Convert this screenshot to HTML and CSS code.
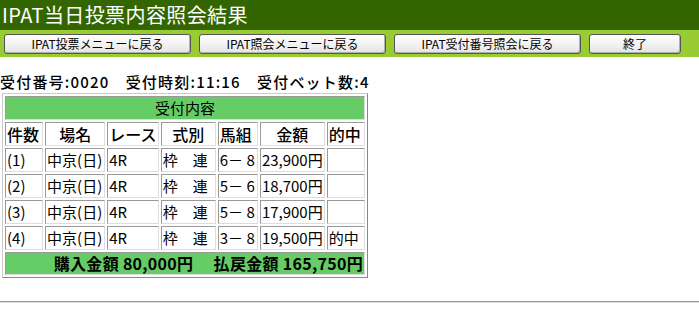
FILE: index.html
```html
<!DOCTYPE html>
<html lang="ja">
<head>
<meta charset="utf-8">
<link rel="stylesheet" href="styles.css">
</head>
<body>
<div class="title">IPAT当日投票内容照会結果</div>
<div class="nav">
  <button class="btn btn-wide">IPAT投票メニューに戻る</button>
  <button class="btn btn-wide">IPAT照会メニューに戻る</button>
  <button class="btn btn-wide">IPAT受付番号照会に戻る</button>
  <button class="btn btn-end">終了</button>
</div>
<div class="info">受付番号:0020　受付時刻:11:16　受付ベット数:4</div>
<table class="bets">
  <tr><th colspan="7" class="head">受付内容</th></tr>
  <tr class="cols">
    <td class="c1">件数</td><td class="c2 center">場名</td><td class="c3">レース</td><td class="c4 center">式別</td><td class="c5">馬組</td><td class="c6 center">金額</td><td class="c7">的中</td>
  </tr>
  <tr><td>(1)</td><td>中京(日)</td><td>4R</td><td>枠　連</td><td>6－ 8</td><td>23,900円</td><td></td></tr>
  <tr><td>(2)</td><td>中京(日)</td><td>4R</td><td>枠　連</td><td>5－ 6</td><td>18,700円</td><td></td></tr>
  <tr><td>(3)</td><td>中京(日)</td><td>4R</td><td>枠　連</td><td>5－ 8</td><td>17,900円</td><td></td></tr>
  <tr><td>(4)</td><td>中京(日)</td><td>4R</td><td>枠　連</td><td>3－ 8</td><td>19,500円</td><td>的中</td></tr>
  <tr><td colspan="7" class="foot">購入金額 80,000円　 払戻金額 165,750円</td></tr>
</table>
<hr class="rule">
</body>
</html>
```
FILE: styles.css
```css
html, body {
  margin: 0;
  padding: 0;
  background: #fff;
  font-family: "Noto Sans CJK JP", "Noto Sans", sans-serif;
  color: #000;
}
.title {
  background: #336600;
  color: #fff;
  font-size: 20px;
  line-height: 30px;
  height: 30px;
  padding-left: 2px;
  letter-spacing: 0.4px;
}
.nav {
  background: #99cc33;
  height: 27px;
  display: flex;
  align-items: center;
  gap: 8px;
  padding-left: 4px;
}
.btn {
  height: 20px;
  background: linear-gradient(#ffffff, #f0f0f0 60%, #e2e2e2);
  border: 1px solid #555;
  border-radius: 3px;
  font-family: "Noto Sans CJK JP", sans-serif;
  font-size: 12px;
  line-height: 18px;
  padding: 0;
  color: #000;
  box-shadow: inset -1px -1px 0 #b0b0b0;
}
.btn-wide { width: 187px; }
.btn-end { width: 92px; }
.info {
  margin-top: 16px;
  font-size: 15px;
  line-height: 18px;
  padding-left: 0;
  font-weight: 500;
  letter-spacing: 1.2px;
}
.bets {
  margin: 2px 0 0 2px;
  border: 1px solid;
  border-color: #ccc #888 #888 #ccc;
  border-spacing: 2px;
  font-size: 15px;
  width: 366px;
}
.bets td, .bets th {
  border: 1px solid;
  border-color: #999 #ddd #ddd #999;
  padding: 0 1px;
  height: 22px;
  line-height: 22px;
  white-space: nowrap;
  font-weight: normal;
}
.bets .head {
  background: #66cc66;
  text-align: center;
}
.cols td { font-weight: 500; font-size: 16px; }
.center { text-align: center; }
.c1 { width: 34px; }
.c2 { width: 56px; }
.c3 { width: 45px; }
.c4 { width: 51px; }
.c5 { width: 36px; }
.c6 { width: 58px; }
.c7 { width: 34px; }
.bets .foot {
  background: #66cc66;
  text-align: right;
  font-weight: bold;
  font-size: 16px;
  height: 21px;
  line-height: 21px;
  letter-spacing: 0.3px;
}
.rule {
  margin: 23px 0 0 0;
  border: 0;
  border-top: 1px solid #999;
  border-bottom: 1px solid #ddd;
  height: 0;
}
```
